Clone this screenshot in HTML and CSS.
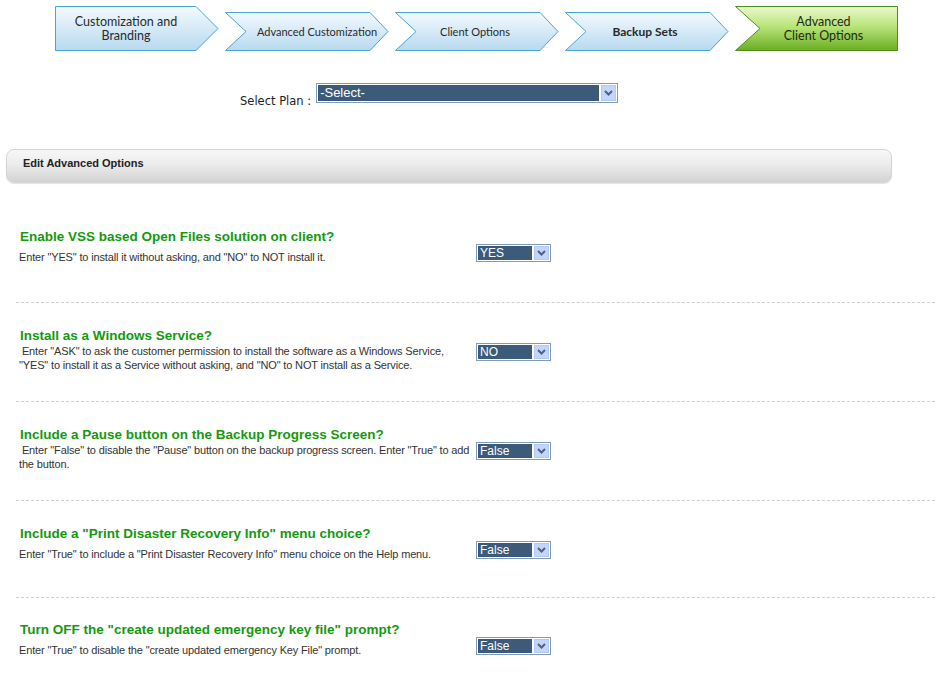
FILE: index.html
```html
<!DOCTYPE html>
<html lang="en">
<head>
    <meta charset="UTF-8">
    <title>Advanced Client Options</title>
    <link rel="stylesheet" href="styles.css">
</head>
<body>

<div class="steps">
    <div class="step step-first">
        <svg class="step-bg" width="164" height="45" viewBox="0 0 164 45">
            <defs>
                <linearGradient id="blueA" x1="0" y1="0" x2="0" y2="1">
                    <stop offset="0" stop-color="#f4fafe"/>
                    <stop offset="1" stop-color="#b7d9ef"/>
                </linearGradient>
            </defs>
            <polygon points="0.5,0.5 141,0.5 163,22.5 141,44.5 0.5,44.5" fill="url(#blueA)" stroke="#4aa3d8"/>
        </svg>
        <span class="step-text">Customization and<br>Branding</span>
    </div>
    <div class="step step-mid">
        <svg class="step-bg" width="164" height="39" viewBox="0 0 164 39">
            <defs>
                <linearGradient id="blueB" x1="0" y1="0" x2="0" y2="1">
                    <stop offset="0" stop-color="#f4fafe"/>
                    <stop offset="1" stop-color="#b7d9ef"/>
                </linearGradient>
            </defs>
            <polygon points="0.5,0.5 145,0.5 163,19.5 145,38.5 0.5,38.5 21,19.5" fill="url(#blueB)" stroke="#4aa3d8"/>
        </svg>
        <span class="step-text">Advanced Customization</span>
    </div>
    <div class="step step-mid step-centered">
        <svg class="step-bg" width="164" height="39" viewBox="0 0 164 39">
            <polygon points="0.5,0.5 145,0.5 163,19.5 145,38.5 0.5,38.5 21,19.5" fill="url(#blueB)" stroke="#4aa3d8"/>
        </svg>
        <span class="step-text">Client Options</span>
    </div>
    <div class="step step-mid step-centered">
        <svg class="step-bg" width="164" height="39" viewBox="0 0 164 39">
            <polygon points="0.5,0.5 145,0.5 163,19.5 145,38.5 0.5,38.5 21,19.5" fill="url(#blueB)" stroke="#4aa3d8"/>
        </svg>
        <span class="step-text bold">Backup Sets</span>
    </div>
    <div class="step step-last">
        <svg class="step-bg" width="163" height="45" viewBox="0 0 163 45">
            <defs>
                <linearGradient id="green" x1="0" y1="0" x2="0" y2="1">
                    <stop offset="0" stop-color="#eaf8cf"/>
                    <stop offset="0.45" stop-color="#b9e47a"/>
                    <stop offset="1" stop-color="#6aae22"/>
                </linearGradient>
            </defs>
            <polygon points="0.5,0.5 162.5,0.5 162.5,44.5 0.5,44.5 25,22.5" fill="url(#green)" stroke="#4f8f1c"/>
        </svg>
        <span class="step-text">Advanced<br>Client Options</span>
    </div>
</div>

<div class="plan-row">
    <label class="plan-label">Select Plan :</label>
    <div class="sel sel-plan">
        <span class="sel-val">-Select-</span>
        <span class="sel-btn"><svg width="9" height="6" viewBox="0 0 9 6"><path d="M1 1 L4.5 4.5 L8 1" fill="none" stroke="#4d6185" stroke-width="2"/></svg></span>
    </div>
</div>

<div class="panel-head">Edit Advanced Options</div>

<div class="options">
    <div class="opt">
        <div class="opt-text">
            <h4>Enable VSS based Open Files solution on client?</h4>
            <p class="gap">Enter "YES" to install it without asking, and "NO" to NOT install it.</p>
        </div>
        <div class="sel sel-small">
            <span class="sel-val">YES</span>
            <span class="sel-btn"><svg width="9" height="6" viewBox="0 0 9 6"><path d="M1 1 L4.5 4.5 L8 1" fill="none" stroke="#4d6185" stroke-width="2"/></svg></span>
        </div>
    </div>
    <div class="opt">
        <div class="opt-text">
            <h4>Install as a Windows Service?</h4>
            <p>&nbsp;Enter "ASK" to ask the customer permission to install the software as a Windows Service, "YES" to install it as a Service without asking, and "NO" to NOT install as a Service.</p>
        </div>
        <div class="sel sel-small">
            <span class="sel-val">NO</span>
            <span class="sel-btn"><svg width="9" height="6" viewBox="0 0 9 6"><path d="M1 1 L4.5 4.5 L8 1" fill="none" stroke="#4d6185" stroke-width="2"/></svg></span>
        </div>
    </div>
    <div class="opt">
        <div class="opt-text">
            <h4>Include a Pause button on the Backup Progress Screen?</h4>
            <p>&nbsp;Enter "False" to disable the "Pause" button on the backup progress screen. Enter "True" to add the button.</p>
        </div>
        <div class="sel sel-small">
            <span class="sel-val">False</span>
            <span class="sel-btn"><svg width="9" height="6" viewBox="0 0 9 6"><path d="M1 1 L4.5 4.5 L8 1" fill="none" stroke="#4d6185" stroke-width="2"/></svg></span>
        </div>
    </div>
    <div class="opt opt-short">
        <div class="opt-text">
            <h4>Include a "Print Disaster Recovery Info" menu choice?</h4>
            <p class="gap">Enter "True" to include a "Print Disaster Recovery Info" menu choice on the Help menu.</p>
        </div>
        <div class="sel sel-small">
            <span class="sel-val">False</span>
            <span class="sel-btn"><svg width="9" height="6" viewBox="0 0 9 6"><path d="M1 1 L4.5 4.5 L8 1" fill="none" stroke="#4d6185" stroke-width="2"/></svg></span>
        </div>
    </div>
    <div class="opt opt-last">
        <div class="opt-text">
            <h4>Turn OFF the "create updated emergency key file" prompt?</h4>
            <p class="gap">Enter "True" to disable the "create updated emergency Key File" prompt.</p>
        </div>
        <div class="sel sel-small">
            <span class="sel-val">False</span>
            <span class="sel-btn"><svg width="9" height="6" viewBox="0 0 9 6"><path d="M1 1 L4.5 4.5 L8 1" fill="none" stroke="#4d6185" stroke-width="2"/></svg></span>
        </div>
    </div>
</div>

</body>
</html>
```

FILE: styles.css
```css
body {
    margin: 0;
    background: #fff;
    font-family: 'Liberation Sans', Arial, sans-serif;
    color: #333;
}
.steps {
    display: flex;
    align-items: flex-end;
    gap: 6px;
    height: 45px;
    margin: 6px 0 0 55px;
}
.step {
    position: relative;
    display: flex;
    align-items: center;
    justify-content: center;
    width: 164px;
    flex: none;
    font-family: Lato, 'Open Sans', sans-serif;
    color: #2a2a2a;
    text-align: center;
}
.step-bg {
    position: absolute;
    left: 0;
    top: 0;
}
.step-text {
    position: relative;
    line-height: 14px;
}
.step-first {
    height: 45px;
    padding-right: 22px;
    box-sizing: border-box;
    font-size: 12.5px;
}
.step-mid {
    height: 39px;
    padding-left: 20px;
    box-sizing: border-box;
    font-size: 11px;
}
.step-centered {
    padding-left: 0;
    padding-right: 4px;
}
.step-last {
    width: 163px;
    height: 45px;
    padding-left: 14px;
    box-sizing: border-box;
    font-size: 12.5px;
    color: #1f2a10;
}
.bold {
    font-weight: bold;
    font-size: 12px;
}
.plan-row {
    display: flex;
    align-items: flex-end;
    margin: 32px 0 0 240px;
}
.plan-label {
    font-family: 'DejaVu Sans', Verdana, sans-serif;
    font-size: 11.5px;
    color: #222;
    margin-right: 5px;
    position: relative;
    top: 5px;
}
.sel {
    display: flex;
    align-items: stretch;
    border: 1px solid #7f9db9;
    background: #fff;
    padding: 1px;
    box-sizing: border-box;
}
.sel-val {
    flex: 1;
    background: #3c5a7a;
    color: #fff;
    padding-left: 2px;
    font-family: 'Liberation Sans', Arial, sans-serif;
}
.sel-btn {
    display: flex;
    align-items: center;
    justify-content: center;
    width: 15px;
    margin-left: 2px;
    background: #c3d5fb;
    border: 1px solid #b6c9f2;
    box-sizing: border-box;
}
.sel-plan {
    width: 302px;
    height: 20px;
}
.sel-plan .sel-val {
    font-size: 13px;
    line-height: 16px;
}
.sel-small {
    width: 75px;
    height: 18px;
    flex: none;
    margin-top: 15px;
}
.sel-small .sel-val {
    font-size: 12px;
    line-height: 14px;
}
.panel-head {
    margin: 46px 0 0 6px;
    width: 886px;
    height: 34px;
    box-sizing: border-box;
    border: 1px solid #d4d4d4;
    border-radius: 8px;
    background: linear-gradient(#f7f7f7, #ececec 45%, #d3d3d3);
    box-shadow: 0 1px 1px #e4e4e4;
    padding-left: 16px;
    font-size: 11px;
    font-weight: bold;
    line-height: 27px;
    color: #222;
}
.options {
    margin: 21px 10px 0 16px;
}
.opt {
    display: flex;
    height: 99px;
    box-sizing: border-box;
    padding: 25px 0 0 3px;
    border-bottom: 1px dashed #cfcfcf;
}
.opt-short {
    height: 97px;
}
.opt-last {
    border-bottom: none;
    padding-top: 24px;
}
.opt-text {
    width: 457px;
    flex: none;
}
.opt h4 {
    margin: 0;
    font-size: 13.5px;
    line-height: 16px;
    color: #14990f;
    padding-left: 1px;
}
.opt p {
    margin: 0;
    max-width: 453px;
    font-size: 11px;
    line-height: 14px;
    letter-spacing: -0.15px;
    color: #333;
}
.opt p.gap {
    margin-top: 5px;
}
```
